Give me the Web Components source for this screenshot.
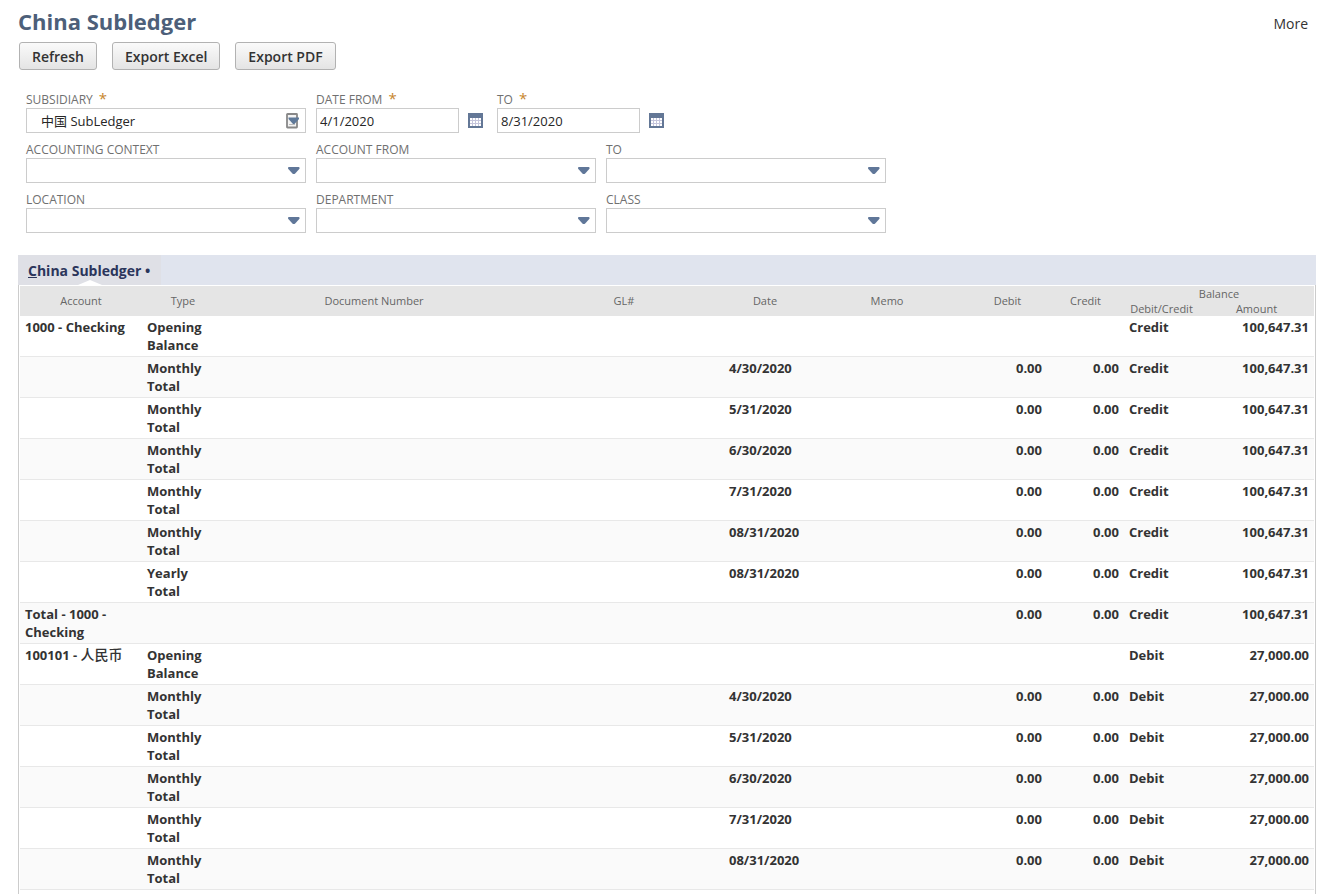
<!DOCTYPE html>
<html lang="en">
<head>
<meta charset="utf-8">
<title>China Subledger</title>
<style>
html, body { margin: 0; height: 100%; overflow: hidden; }
body { background: #fff; color: #262626; font-family: "Open Sans", "Noto Sans CJK SC", sans-serif; font-size: 13px; }
</style>
</head>
<body>
<report-page>
  <page-header slot="header" heading="China Subledger"></page-header>
  <action-button slot="actions">Refresh</action-button>
  <action-button slot="actions">Export Excel</action-button>
  <action-button slot="actions">Export PDF</action-button>
  <filter-form slot="filters"></filter-form>
  <report-tabs slot="report" label="China Subledger">
    <ledger-table></ledger-table>
  </report-tabs>
</report-page>

<script>
class Base extends HTMLElement {
  connectedCallback() {
    if (this.shadowRoot) return;
    this.attachShadow({ mode: "open" }).innerHTML = this.render();
  }
}

customElements.define("report-page", class extends Base {
  render() {
    return `<style>
      :host { display: flex; flex-direction: column; height: 100vh; box-sizing: border-box; padding: 8px 17px 0 18px; overflow: hidden; }
      .actions { display: flex; gap: 15px; padding: 6px 0 0 1px; }
      .filters { padding: 21px 8px 22px; }
      .report { flex: 1; min-height: 0; display: flex; flex-direction: column; }
    </style>
    <slot name="header"></slot>
    <div class="actions"><slot name="actions"></slot></div>
    <div class="filters"><slot name="filters"></slot></div>
    <div class="report"><slot name="report"></slot></div>`;
  }
});

customElements.define("page-header", class extends Base {
  render() {
    return `<style>
      :host { display: flex; justify-content: space-between; align-items: center; height: 28px; padding-right: 8px; }
      h1 { margin: 0; font-size: 22px; line-height: 26px; padding-bottom: 2px; font-weight: 700; color: #4d5f79; }
      a { font-size: 14px; line-height: 20px; padding-top: 4px; color: #333; text-decoration: none; }
    </style>
    <h1>${this.getAttribute("heading")}</h1><a href="#more">More</a>`;
  }
});

customElements.define("action-button", class extends Base {
  render() {
    return `<style>
      :host { display: block; }
      button { display: block; height: 28px; box-sizing: border-box; padding: 1px 12px 0; border: 1px solid #b2b2b2; border-radius: 3px;
        background: linear-gradient(#fafafa, #e4e4e4); font: 600 14px/26px "Open Sans", sans-serif; color: #333; cursor: pointer; }
    </style><button type="button"><slot></slot></button>`;
  }
});

const labelStyles = `
  :host { display: block; }
  label { display: block; font-size: 12px; line-height: 17px; color: #707070; text-transform: uppercase; white-space: nowrap; }
  label.required::after { content: "*"; margin-left: 6px; font-size: 15px; line-height: 12px; color: #c7862d; }
`;

customElements.define("select-field", class extends Base {
  render() {
    const value = this.getAttribute("value") || "";
    const picker = this.hasAttribute("picker")
      ? `<svg width="15" height="16" viewBox="0 0 15 16"><rect x="2" y="1" width="10" height="13.500" rx=".5" fill="#f4f4f4" stroke="#888" stroke-width="1.800"/><path d="M4 11.500h6" stroke="#bbb"/><path d="M3.500 4.500h10.500v1.500L9.500 11H8L3.500 6z" fill="#5f7999"/></svg>`
      : `<svg width="12" height="8" viewBox="0 0 12 8"><path d="M.8 0h10q.7 0 .7.700v1L7.200 6.500Q5.800 7.500 4.400 6.500L.1 1.700v-1Q.1 0 .8 0z" fill="#607799"/></svg>`;
    return `<style>${labelStyles}
      .box { display: grid; align-items: center; }
      .box > * { grid-area: 1 / 1; }
      select { appearance: none; width: 100%; height: 25px; box-sizing: border-box; border: 1px solid #ccc; border-radius: 0; background: #fff;
        padding: 0 24px 0 14px; font: 13px "Open Sans", "Noto Sans CJK SC", sans-serif; color: #262626; }
      svg { justify-self: end; margin-right: 6px; pointer-events: none; }
    </style>
    <label for="f" class="${this.hasAttribute("required") ? "required" : ""}">${this.getAttribute("label")}</label>
    <div class="box"><select id="f"><option>${value}</option></select>${picker}</div>`;
  }
});

customElements.define("date-field", class extends Base {
  render() {
    return `<style>${labelStyles}
      .row { display: flex; align-items: center; gap: 9px; }
      input { width: 143px; height: 25px; box-sizing: border-box; border: 1px solid #ccc; padding: 0 3px; background: #fff; font: 13px "Open Sans", sans-serif; color: #262626; }
      button { display: block; border: 0; padding: 0; background: none; height: 15px; cursor: pointer; }
      svg { display: block; }
    </style>
    <label for="d" class="required">${this.getAttribute("label")}</label>
    <div class="row"><input id="d" type="text" value="${this.getAttribute("value")}">
      <button type="button" aria-label="Pick a date"><svg width="15" height="15" viewBox="0 0 15 15" shape-rendering="crispEdges">
        <rect width="15" height="15" rx="1" fill="#637796"/><rect x="2" y="5" width="11" height="8" fill="#fff"/>
        <path d="M4.500 5v8M7.500 5v8M10.500 5v8M2 7.500h11M2 10.500h11" stroke="#c5c5dc" fill="none"/></svg></button></div>`;
  }
});

customElements.define("filter-form", class extends Base {
  render() {
    return `<style>
      :host { display: block; }
      form { display: grid; grid-template-columns: repeat(3, minmax(0, 280px)); gap: 8px 10px; }
      .dates { grid-column: span 2; display: flex; gap: 14px; }
    </style>
    <form>
      <select-field label="Subsidiary" value="中国 SubLedger" required picker></select-field>
      <div class="dates">
        <date-field label="Date From" value="4/1/2020"></date-field>
        <date-field label="To" value="8/31/2020"></date-field>
      </div>
      <select-field label="Accounting Context"></select-field>
      <select-field label="Account From"></select-field>
      <select-field label="To"></select-field>
      <select-field label="Location"></select-field>
      <select-field label="Department"></select-field>
      <select-field label="Class"></select-field>
    </form>`;
  }
});

customElements.define("report-tabs", class extends Base {
  render() {
    const label = this.getAttribute("label");
    return `<style>
      :host { flex: 1; min-height: 0; display: flex; flex-direction: column; }
      nav { flex: none; display: flex; height: 30px; background: #e0e4ee; }
      a { position: relative; padding: 0 11px 0 10px; background: #dfe0e6; font-size: 14px; line-height: 32px; font-weight: 700; color: #2b355b; text-decoration: none; }
      a::after { content: ""; position: absolute; left: 50%; bottom: 0; margin-left: -12px; border: solid transparent; border-width: 0 12px 5px; border-bottom-color: #fff; }
      .panel { flex: 1; min-height: 0; overflow: hidden; border: solid #ccc; border-width: 0 1px; padding: 1px 1px 0; }
    </style>
    <nav><a href="#ledger"><u>${label[0]}</u>${label.slice(1)} •</a></nav>
    <div class="panel"><slot></slot></div>`;
  }
});

const zero = "0.00";
const section = (account, side, amount, dates, extra = []) => [
  [account, "Opening Balance", "", "", "", side, amount],
  ...dates.map(d => ["", "Monthly Total", d, zero, zero, side, amount]),
  ...extra
].map(([acct, type, date, debit, credit, dc, total]) => [acct, type, "", "", date, "", debit, credit, dc, total]);

const dates = ["4/30/2020", "5/31/2020", "6/30/2020", "7/31/2020", "08/31/2020"];
const rows = [
  ...section("1000 - Checking", "Credit", "100,647.31", dates, [
    ["", "Yearly Total", "08/31/2020", zero, zero, "Credit", "100,647.31"],
    ["Total - 1000 - Checking", "", "", zero, zero, "Credit", "100,647.31"]
  ]),
  ...section(`100101 - <span lang="zh">人民币</span>`, "Debit", "27,000.00", dates)
];

customElements.define("ledger-table", class extends Base {
  render() {
    const widths = [122, 82, 300, 200, 82, 162, 79, 77, 75, 115];
    const heads = ["Account", "Type", "Document Number", "GL#", "Date", "Memo", "Debit", "Credit"];
    return `<style>
      :host { display: block; }
      table { width: 100%; table-layout: fixed; border-collapse: separate; border-spacing: 0; }
      th { padding: 0 5px; background: #e5e5e5; font-size: 11px; line-height: 15px; font-weight: 400; color: #666; text-align: center; white-space: nowrap; }
      th[rowspan] { padding-bottom: 2px; }
      td { height: 36px; padding: 2px 5px; border-bottom: 1px solid #e8e8e8; font-size: 13px; line-height: 18px; font-weight: 700; color: #333; vertical-align: top; }
      tr:nth-child(even) td { background: #fafafa; }
      td.num { text-align: right; }
      [lang=zh] { font-size: 14px; line-height: 14px; font-weight: 500; }
    </style>
    <table>
      <colgroup>${widths.map(w => `<col style="width:${w}px">`).join("")}</colgroup>
      <thead>
        <tr>${heads.map(h => `<th rowspan="2">${h}</th>`).join("")}<th colspan="2">Balance</th></tr>
        <tr><th>Debit/Credit</th><th>Amount</th></tr>
      </thead>
      <tbody>${rows.map(r => `<tr>${r.map((c, i) => `<td${[6, 7, 9].includes(i) ? ' class="num"' : ""}>${c}</td>`).join("")}</tr>`).join("")}</tbody>
    </table>`;
  }
});
</script>
</body>
</html>
